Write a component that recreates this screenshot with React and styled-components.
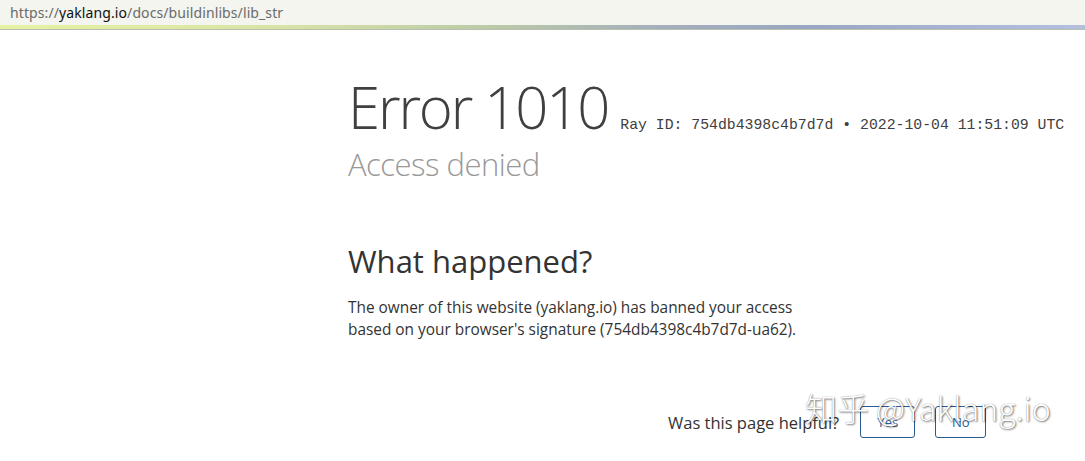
import React from "react";
import styled, { createGlobalStyle } from "styled-components";

const Global = createGlobalStyle`
  html, body { margin: 0; padding: 0; background: #fff; }
  body { font-family: "Open Sans", "Noto Sans", sans-serif; overflow: hidden; }
`;

const Page = styled.div`
  position: relative;
  width: 1085px;
  height: 461px;
  overflow: hidden;
`;

const UrlBar = styled.div`
  height: 25px;
  background: #f3f5ee;
  display: flex;
  align-items: center;
  padding-left: 10px;
  font-family: "Noto Sans", "Open Sans", sans-serif;
  font-size: 14px;
  color: #6b6b6b;
  letter-spacing: 0.1px;
`;

const Host = styled.span`
  color: #111;
`;

const Stripe = styled.div`
  height: 4px;
  background: linear-gradient(90deg, #e6f2a2 0%, #d8e4a6 25%, #bccaa8 45%, #a4b0bc 60%, #9aa6c2 75%, #b4c0de 100%);
  border-bottom: 1px solid #b9bfb0;
`;

const Content = styled.main`
  padding: 44px 0 0 348px;
  display: flex;
  flex-direction: column;
`;

const TitleRow = styled.div`
  display: flex;
  align-items: baseline;
  gap: 12px;
  white-space: nowrap;
`;

const ErrorTitle = styled.h1`
  margin: 0;
  flex-shrink: 0;
  font-weight: 300;
  font-size: 58px;
  line-height: 66px;
  color: #404040;
  letter-spacing: -2.1px;
`;

const RayInfo = styled.span`
  font-family: "Liberation Mono", monospace;
  font-size: 14.8px;
  color: #404040;
  white-space: nowrap;
`;

const Subtitle = styled.h2`
  margin: 4px 0 0;
  font-weight: 300;
  font-size: 31px;
  line-height: 40px;
  color: #999;
  letter-spacing: -0.5px;
`;

const Section = styled.section`
  margin-top: 57px;
`;

const SectionTitle = styled.h2`
  margin: 0;
  font-weight: 400;
  font-size: 31px;
  line-height: 40px;
  color: #333;
`;

const Paragraph = styled.p`
  margin: 16px 0 0;
  font-size: 15.4px;
  line-height: 22px;
  color: #333;
  max-width: 470px;
`;

const Feedback = styled.div`
  margin-top: 65px;
  margin-left: 320px;
  display: flex;
  align-items: center;
  gap: 20px;
`;

const FeedbackLabel = styled.span`
  font-size: 16.5px;
  color: #333;
  margin-right: 1px;
`;

const FeedbackButton = styled.button`
  width: ${(p) => p.$w}px;
  height: 32px;
  background: #fff;
  border: 1px solid #2a5a94;
  border-radius: 3px;
  color: #2a5a94;
  font-family: "Open Sans", sans-serif;
  font-size: 13px;
  padding: 0;
  cursor: pointer;
`;

const Watermark = styled.div`
  position: absolute;
  left: 805px;
  top: 384px;
  font-family: "Noto Sans CJK SC", "Noto Sans", sans-serif;
  font-weight: 300;
  font-size: 32px;
  color: #fff;
  text-shadow: 1px 1px 2px rgba(0,0,0,0.5), 0 0 1px rgba(0,0,0,0.45);
  white-space: nowrap;
  pointer-events: none;
`;

export default function App() {
  return (
    <Page>
      <Global />
      <UrlBar>
        https://<Host>yaklang.io</Host>/docs/buildinlibs/lib_str
      </UrlBar>
      <Stripe />
      <Content>
        <TitleRow>
          <ErrorTitle>Error 1010</ErrorTitle>
          <RayInfo>Ray ID: 754db4398c4b7d7d • 2022-10-04 11:51:09 UTC</RayInfo>
        </TitleRow>
        <Subtitle>Access denied</Subtitle>
        <Section>
          <SectionTitle>What happened?</SectionTitle>
          <Paragraph>
            The owner of this website (yaklang.io) has banned your access based on your
            browser's signature (754db4398c4b7d7d-ua62).
          </Paragraph>
        </Section>
        <Feedback>
          <FeedbackLabel>Was this page helpful?</FeedbackLabel>
          <FeedbackButton $w={55}>Yes</FeedbackButton>
          <FeedbackButton $w={51}>No</FeedbackButton>
        </Feedback>
      </Content>
      <Watermark>知乎 @Yaklang.io</Watermark>
    </Page>
  );
}
